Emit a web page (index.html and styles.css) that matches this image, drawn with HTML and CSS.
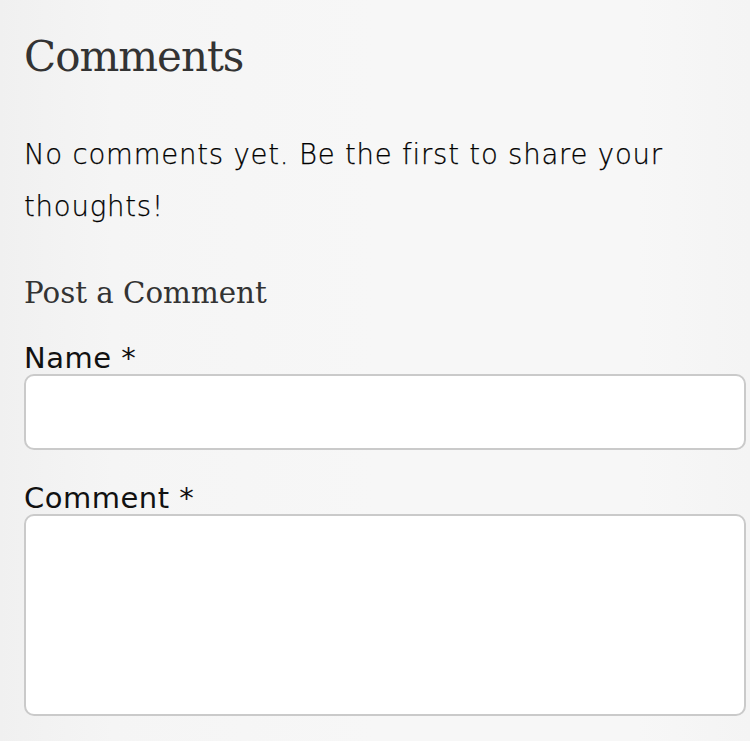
FILE: index.html
```html
<!DOCTYPE html>
<html lang="en">
<head>
<meta charset="utf-8">
<title>Comments</title>
<link rel="stylesheet" href="styles.css">
</head>
<body>
<section class="comments">
  <h2 class="comments-title">Comments</h2>
  <p class="comments-empty">No comments yet. Be the first to share your thoughts!</p>
  <form class="comment-form">
    <h3 class="form-title">Post a Comment</h3>
    <label class="field-label" for="name">Name *</label>
    <input class="field-input" id="name" type="text">
    <label class="field-label field-label-comment" for="comment">Comment *</label>
    <textarea class="field-textarea" id="comment"></textarea>
  </form>
</section>
</body>
</html>
```
FILE: styles.css
```css
html, body {
  margin: 0;
  padding: 0;
}
body {
  background: linear-gradient(to right, #f0f0f0 0%, #f5f5f5 15%, #f7f7f7 50%, #f7f7f7 85%, #f4f4f4 100%);
  min-height: 741px;
}
.comments {
  padding: 32px 4px 0 24px;
}
.comments-title {
  margin: 0;
  font-family: "DejaVu Serif", serif;
  font-weight: normal;
  font-size: 42px;
  line-height: 50px;
  letter-spacing: -1px;
  color: #333;
}
.comments-empty {
  margin: 46px 0 0;
  font-family: "DejaVu Sans", sans-serif;
  font-weight: 200;
  font-size: 27.5px;
  line-height: 52px;
  letter-spacing: 0.8px;
  color: #000;
  -webkit-text-stroke: 0.25px #000;
}
.comment-form {
  margin: 0;
}
.form-title {
  margin: 43px 0 0;
  font-family: "DejaVu Serif", serif;
  font-weight: normal;
  font-size: 29.3px;
  line-height: 36px;
  color: #333;
}
.field-label {
  display: block;
  margin-top: 31px;
  font-family: "DejaVu Sans", sans-serif;
  font-size: 29px;
  line-height: 32px;
  letter-spacing: 0.5px;
  color: #111;
}
.field-input,
.field-textarea {
  display: block;
  box-sizing: border-box;
  width: 722px;
  margin: 0;
  padding: 10px 14px;
  background: #fff;
  border: 2px solid #cacaca;
  border-radius: 10px;
  font-family: "DejaVu Sans", sans-serif;
  font-size: 24px;
  outline: none;
  -webkit-appearance: none;
  appearance: none;
}
.field-input {
  height: 76px;
}
.field-label-comment {
  margin-top: 32px;
}
.field-textarea {
  height: 202px;
  resize: none;
}
```
